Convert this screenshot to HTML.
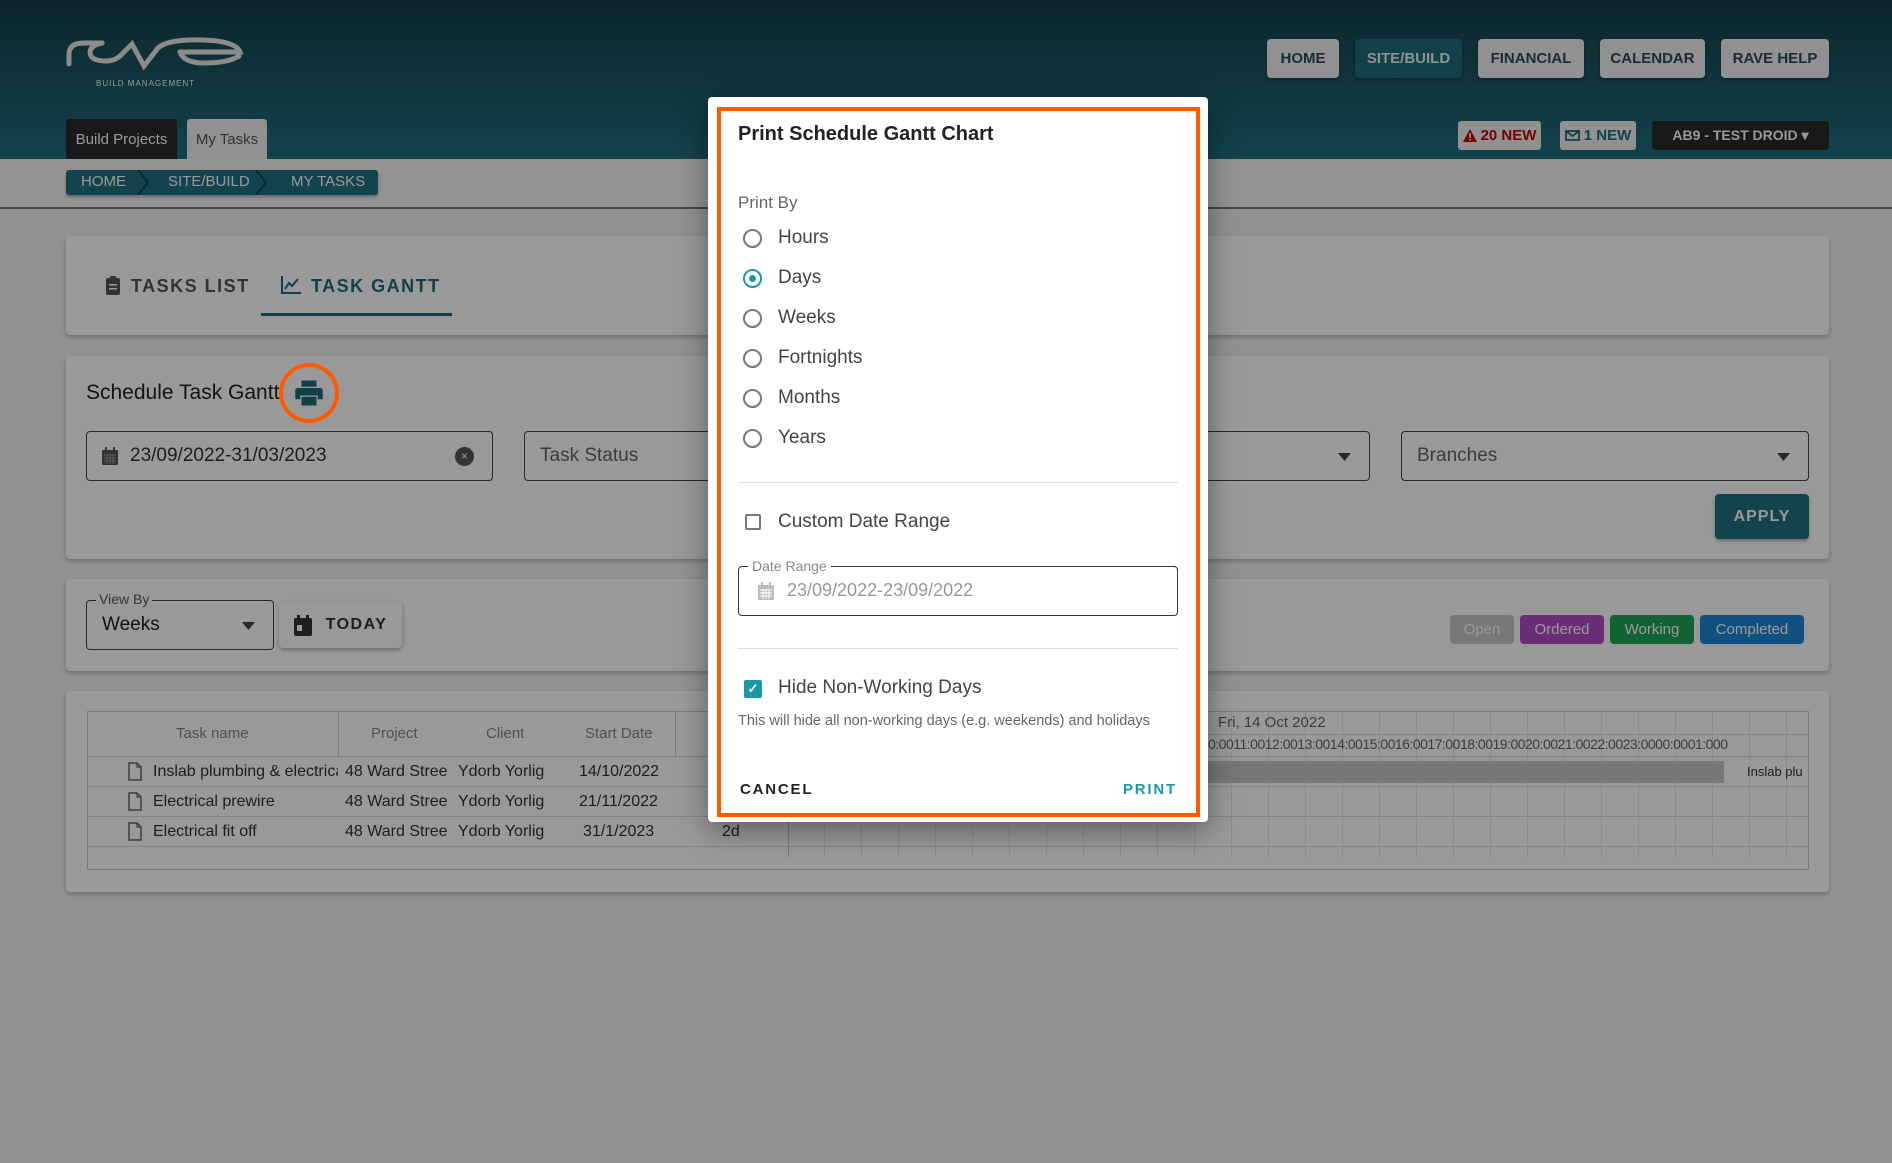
<!DOCTYPE html>
<html><head><meta charset="utf-8"><style>
*{box-sizing:border-box;margin:0;padding:0}
body{width:1892px;height:1163px;position:relative;overflow:hidden;background:#f2f2f2;font-family:"Liberation Sans",sans-serif;color:#333}
.a{position:absolute}
.hdr{left:0;top:0;width:1892px;height:159px;background:linear-gradient(#163f4b,#207080)}
.nb{top:39px;height:39px;background:#f2f2f2;border-radius:4px;font-size:15px;font-weight:bold;color:#2c4b55;display:flex;align-items:center;justify-content:center;box-shadow:0 2px 3px rgba(0,0,0,.3)}
.card{background:#fff;border-radius:4px;box-shadow:0 2px 4px rgba(0,0,0,.25)}
.fld{border:1.5px solid #444;border-radius:4px;font-size:19px;color:#666;display:flex;align-items:center;padding-left:15px}
.chip{top:615px;height:29px;border-radius:4px;color:#fff;font-size:15px;display:flex;align-items:center;justify-content:center}
.ov{left:0;top:0;width:1892px;height:1163px;background:rgba(0,0,0,.4)}
.cell{font-size:16px;color:#333;white-space:nowrap;overflow:hidden}
.rad{width:19px;height:19px;border:2px solid #777;border-radius:50%}
.rl{font-size:19px;color:#444}
.doc{position:absolute;left:40px;width:14px;height:19px}
</style></head><body>
<div class="a hdr"></div>
<svg class="a" style="left:64px;top:34px" width="182" height="56" viewBox="0 0 182 56"><g fill="none" stroke="#e8e8e8" stroke-width="5" stroke-linecap="round"><path d="M5 30 V20 Q5 9 20 9 H38"/><path d="M38 9 Q26 11 26 19 Q27 27 42 27 Q52 27 58 20 L68 10 L80 32 L94 14 Q104 5 138 6 Q172 7 176 18 H116"/><path d="M116 18 Q120 29 140 29 Q164 29 175 22"/></g><text x="32" y="52" font-size="8" fill="#fff" font-family="Liberation Sans" letter-spacing="1">BUILD MANAGEMENT</text></svg>
<div class="a nb" style="left:1267px;width:72px">HOME</div>
<div class="a nb" style="left:1355px;width:107px;background:#206b7a;color:#e8f4f6">SITE/BUILD</div>
<div class="a nb" style="left:1478px;width:106px">FINANCIAL</div>
<div class="a nb" style="left:1600px;width:105px">CALENDAR</div>
<div class="a nb" style="left:1721px;width:108px">RAVE HELP</div>
<div class="a" style="left:66px;top:119px;width:111px;height:40px;background:#2a2a2a;color:#fff;font-size:15px;display:flex;align-items:center;justify-content:center;border-radius:3px 3px 0 0">Build Projects</div>
<div class="a" style="left:187px;top:119px;width:80px;height:40px;background:#f2f2f2;color:#555;font-size:15px;display:flex;align-items:center;justify-content:center;border-radius:3px 3px 0 0">My Tasks</div>
<div class="a" style="left:1458px;top:121px;width:83px;height:29px;background:#f2f2f2;border-radius:3px;color:#c00;font-weight:bold;font-size:15px;display:flex;align-items:center;justify-content:center;gap:4px"><svg width="14" height="13" viewBox="0 0 14 13"><path d="M7 0L14 13H0z" fill="#c00"/><rect x="6.2" y="4" width="1.6" height="5" fill="#fff"/><rect x="6.2" y="10" width="1.6" height="1.6" fill="#fff"/></svg>20 NEW</div>
<div class="a" style="left:1560px;top:121px;width:76px;height:29px;background:#f2f2f2;border-radius:3px;color:#206b7a;font-weight:bold;font-size:15px;display:flex;align-items:center;justify-content:center;gap:4px"><svg width="15" height="11" viewBox="0 0 15 11"><rect x="1" y="1" width="13" height="9" fill="none" stroke="#206b7a" stroke-width="1.8"/><path d="M1 1L7.5 6L14 1" fill="none" stroke="#206b7a" stroke-width="1.8"/></svg>1 NEW</div>
<div class="a" style="left:1652px;top:121px;width:177px;height:29px;background:#2a2a2a;border-radius:3px;color:#fff;font-weight:bold;font-size:14px;display:flex;align-items:center;justify-content:center">AB9 - TEST DROID ▾</div>
<div class="a" style="left:0;top:159px;width:1892px;height:50px;background:#f5f5f5;border-bottom:2px solid #777"></div>
<div class="a" style="left:66px;top:170px;width:312px;height:25px;background:#207080;border-radius:3px;color:#fff;font-size:15px;box-shadow:0 2px 3px rgba(0,0,0,.3)">
<span class="a" style="left:15px;top:3px">HOME</span><span class="a" style="left:102px;top:3px">SITE/BUILD</span><span class="a" style="left:225px;top:3px">MY TASKS</span>
<svg class="a" style="left:70px;top:0" width="14" height="25"><path d="M2 0L12 12.5L2 25" fill="none" stroke="#0e4550" stroke-width="2"/></svg><svg class="a" style="left:188px;top:0" width="14" height="25"><path d="M2 0L12 12.5L2 25" fill="none" stroke="#0e4550" stroke-width="2"/></svg></div>

<div class="a card" style="left:66px;top:236px;width:1763px;height:99px"></div>
<svg class="a" style="left:106px;top:276px" width="14" height="19" viewBox="0 0 14 19"><rect x="0" y="2" width="14" height="17" rx="2" fill="#555"/><rect x="4" y="0" width="6" height="4" rx="1" fill="#555"/><rect x="3" y="8" width="8" height="1.5" fill="#fff"/><rect x="3" y="12" width="8" height="1.5" fill="#fff"/></svg>
<div class="a" style="left:131px;top:276px;font-size:18px;font-weight:bold;letter-spacing:1.5px;color:#555">TASKS LIST</div>
<svg class="a" style="left:281px;top:276px" width="20" height="18" viewBox="0 0 20 18"><path d="M1 0V17H20" fill="none" stroke="#1f6c7b" stroke-width="2"/><path d="M4 13L8 7L11 10L17 3" fill="none" stroke="#1f6c7b" stroke-width="2"/></svg>
<div class="a" style="left:311px;top:276px;font-size:18px;font-weight:bold;letter-spacing:1.5px;color:#1f6c7b">TASK GANTT</div>
<div class="a" style="left:261px;top:313px;width:191px;height:3px;background:#1f6c7b"></div>

<div class="a card" style="left:66px;top:356px;width:1763px;height:203px"></div>
<div class="a" style="left:86px;top:381px;font-size:21px;color:#222">Schedule Task Gantt</div>
<svg class="a" style="left:294px;top:378px" width="30" height="30" viewBox="0 0 24 24"><path fill="#1f6c7b" d="M6 2h12v5H6zM3 8h18a2 2 0 0 1 2 2v7h-4v-3H5v3H1v-7a2 2 0 0 1 2-2zM6 15h12v7H6z"/></svg>
<div class="a fld" style="left:86px;top:431px;width:407px;height:50px;color:#333"><svg width="16" height="18" viewBox="0 0 16 18" style="margin-right:12px"><rect x="0" y="3" width="16" height="15" rx="1" fill="#555"/><rect x="3" y="0" width="2" height="4" fill="#555"/><rect x="11" y="0" width="2" height="4" fill="#555"/><path d="M2 8h12M2 11h12M2 14h12M5 7v10M8 7v10M11 7v10" stroke="#999" stroke-width="1"/></svg>23/09/2022-31/03/2023<span class="a" style="right:18px;top:15px;width:19px;height:19px;border-radius:50%;background:#555;color:#fff;font-size:12px;text-align:center;line-height:19px">×</span></div>
<div class="a fld" style="left:524px;top:431px;width:300px;height:50px">Task Status</div>
<div class="a fld" style="left:1180px;top:431px;width:190px;height:50px"><svg class="a" style="right:18px;top:21px" width="13" height="8"><path d="M0 0H13L6.5 8z" fill="#444"/></svg></div>
<div class="a fld" style="left:1401px;top:431px;width:408px;height:50px">Branches<svg class="a" style="right:18px;top:21px" width="13" height="8"><path d="M0 0H13L6.5 8z" fill="#444"/></svg></div>
<div class="a" style="left:1715px;top:494px;width:94px;height:45px;background:#207080;border-radius:4px;color:#fff;font-weight:bold;font-size:16px;letter-spacing:1px;display:flex;align-items:center;justify-content:center;box-shadow:0 2px 3px rgba(0,0,0,.3)">APPLY</div>

<div class="a card" style="left:66px;top:579px;width:1763px;height:92px"></div>
<div class="a fld" style="left:86px;top:600px;width:188px;height:50px;color:#222">Weeks<svg class="a" style="right:18px;top:21px" width="13" height="8"><path d="M0 0H13L6.5 8z" fill="#444"/></svg></div>
<div class="a" style="left:96px;top:591px;background:#fff;padding:0 3px;font-size:14px;color:#555">View By</div>
<div class="a" style="left:279px;top:602px;width:123px;height:46px;background:#fff;border-radius:4px;box-shadow:0 2px 4px rgba(0,0,0,.3);font-size:16px;font-weight:bold;letter-spacing:1.5px;color:#333;display:flex;align-items:center;justify-content:center"><svg width="18" height="21" viewBox="0 0 18 21" style="margin-right:14px"><rect x="0" y="3" width="18" height="18" rx="2" fill="#333"/><rect x="3" y="0" width="3" height="5" fill="#333"/><rect x="12" y="0" width="3" height="5" fill="#333"/><rect x="3" y="10" width="5" height="6" fill="#fff"/></svg>TODAY</div>
<div class="a chip" style="left:1450px;width:64px;background:#c8c8c8">Open</div>
<div class="a chip" style="left:1520px;width:84px;background:#b44bc8">Ordered</div>
<div class="a chip" style="left:1610px;width:84px;background:#1fa658">Working</div>
<div class="a chip" style="left:1700px;width:104px;background:#1d88d8">Completed</div>

<div class="a card" style="left:66px;top:691px;width:1763px;height:201px"></div>
<div class="a" style="left:87px;top:711px;width:1722px;height:159px;border:1.5px solid #ccc;background:#fff">
<div class="a" style="left:0;top:44px;width:1720px;height:1px;background:#ccc"></div>
<div class="a" style="left:250px;top:0;width:1px;height:44px;background:#ccc"></div>
<div class="a" style="left:587px;top:0;width:1px;height:44px;background:#ccc"></div>
<div class="a" style="left:700px;top:0;width:1px;height:145px;background:#ccc"></div>
<div class="a" style="left:0;top:74px;width:1720px;height:1px;background:#ddd"></div>
<div class="a" style="left:0;top:104px;width:1720px;height:1px;background:#ddd"></div>
<div class="a" style="left:0;top:134px;width:1720px;height:1px;background:#ddd"></div>
<div class="a" style="left:700px;top:22px;width:1020px;height:1px;background:#ddd"></div>
<div class="a" style="left:700px;top:0;width:1020px;height:145px;background:repeating-linear-gradient(90deg,transparent 0,transparent 36px,#e6e6e6 36px,#e6e6e6 37px)"></div>
<div class="a cell" style="left:88px;top:13px;color:#888;font-size:15px">Task name</div>
<div class="a cell" style="left:283px;top:13px;color:#888;font-size:15px">Project</div>
<div class="a cell" style="left:398px;top:13px;color:#888;font-size:15px">Client</div>
<div class="a cell" style="left:497px;top:13px;color:#888;font-size:15px">Start Date</div>
<div class="a cell" style="left:1130px;top:2px;color:#666;font-size:15px">Fri, 14 Oct 2022</div>
<div class="a cell" style="left:1120px;top:24px;color:#666;font-size:14px;width:600px;letter-spacing:-.5px">0:0011:0012:0013:0014:0015:0016:0017:0018:0019:0020:0021:0022:0023:0000:0001:000</div>
<div class="a" style="left:1000px;top:49px;width:636px;height:22px;background:#c6c6c6;border-radius:2px"></div>
<div class="a cell" style="left:1659px;top:52px;font-size:13px;width:60px">Inslab plu</div>
<svg class="doc" style="top:50px" viewBox="0 0 14 19"><path d="M1 1H9L13 5V18H1z" fill="none" stroke="#666" stroke-width="1.5"/><path d="M9 1V5H13" fill="none" stroke="#666" stroke-width="1.2"/></svg>
<svg class="doc" style="top:80px" viewBox="0 0 14 19"><path d="M1 1H9L13 5V18H1z" fill="none" stroke="#666" stroke-width="1.5"/><path d="M9 1V5H13" fill="none" stroke="#666" stroke-width="1.2"/></svg>
<svg class="doc" style="top:110px" viewBox="0 0 14 19"><path d="M1 1H9L13 5V18H1z" fill="none" stroke="#666" stroke-width="1.5"/><path d="M9 1V5H13" fill="none" stroke="#666" stroke-width="1.2"/></svg>
<div class="a cell" style="left:65px;top:51px;width:185px">Inslab plumbing &amp; electrical</div>
<div class="a cell" style="left:65px;top:81px">Electrical prewire</div>
<div class="a cell" style="left:65px;top:111px">Electrical fit off</div>
<div class="a cell" style="left:257px;top:51px">48 Ward Stree</div><div class="a cell" style="left:370px;top:51px">Ydorb Yorlig</div><div class="a cell" style="left:491px;top:51px">14/10/2022</div>
<div class="a cell" style="left:257px;top:81px">48 Ward Stree</div><div class="a cell" style="left:370px;top:81px">Ydorb Yorlig</div><div class="a cell" style="left:491px;top:81px">21/11/2022</div>
<div class="a cell" style="left:257px;top:111px">48 Ward Stree</div><div class="a cell" style="left:370px;top:111px">Ydorb Yorlig</div><div class="a cell" style="left:495px;top:111px">31/1/2023</div>
<div class="a cell" style="left:634px;top:111px">2d</div>
</div>

<div class="a ov"></div>
<div class="a" style="left:279px;top:363px;width:60px;height:60px;border:4px solid #ff5a00;border-radius:50%"></div>

<div class="a" style="left:708px;top:97px;width:500px;height:725px;background:#fff;border-radius:4px;box-shadow:0 8px 30px rgba(0,0,0,.4)"></div>
<div class="a" style="left:717px;top:107px;width:483px;height:710px;border:4px solid #ff5a00"></div>
<div class="a" style="left:738px;top:123px;font-size:20px;font-weight:bold;color:#222">Print Schedule Gantt Chart</div>
<div class="a" style="left:738px;top:193px;font-size:17px;color:#666">Print By</div>
<div class="a rad" style="left:743px;top:229px"></div><div class="a rl" style="left:778px;top:227px">Hours</div>
<div class="a rad" style="left:743px;top:269px;border-color:#1a97a8"><div class="a" style="left:4px;top:4px;width:7px;height:7px;border-radius:50%;background:#1a97a8"></div></div><div class="a rl" style="left:778px;top:267px">Days</div>
<div class="a rad" style="left:743px;top:309px"></div><div class="a rl" style="left:778px;top:307px">Weeks</div>
<div class="a rad" style="left:743px;top:349px"></div><div class="a rl" style="left:778px;top:347px">Fortnights</div>
<div class="a rad" style="left:743px;top:389px"></div><div class="a rl" style="left:778px;top:387px">Months</div>
<div class="a rad" style="left:743px;top:429px"></div><div class="a rl" style="left:778px;top:427px">Years</div>
<div class="a" style="left:738px;top:482px;width:440px;height:1px;background:#ddd"></div>
<div class="a" style="left:745px;top:514px;width:16px;height:16px;border:2px solid #777;border-radius:2px"></div>
<div class="a rl" style="left:778px;top:511px">Custom Date Range</div>
<div class="a" style="left:738px;top:566px;width:440px;height:50px;border:1.5px solid #333;border-radius:4px"></div>
<div class="a" style="left:748px;top:558px;background:#fff;padding:0 4px;font-size:14px;color:#888">Date Range</div>
<svg class="a" style="left:758px;top:582px" width="16" height="18" viewBox="0 0 16 18"><rect x="0" y="3" width="16" height="15" rx="1" fill="#bbb"/><rect x="3" y="0" width="2" height="4" fill="#bbb"/><rect x="11" y="0" width="2" height="4" fill="#bbb"/><path d="M2 8h12M2 11h12M2 14h12M5 7v10M8 7v10M11 7v10" stroke="#fff" stroke-width="1"/></svg>
<div class="a" style="left:787px;top:580px;font-size:18px;color:#999">23/09/2022-23/09/2022</div>
<div class="a" style="left:738px;top:648px;width:440px;height:1px;background:#ddd"></div>
<div class="a" style="left:744px;top:680px;width:18px;height:18px;background:#1a97a8;border-radius:2px;color:#fff;font-size:13px;text-align:center;line-height:18px;font-weight:bold">✓</div>
<div class="a rl" style="left:778px;top:677px">Hide Non-Working Days</div>
<div class="a" style="left:738px;top:713px;font-size:14.5px;color:#666">This will hide all non-working days (e.g. weekends) and holidays</div>
<div class="a" style="left:740px;top:781px;font-size:15px;font-weight:bold;letter-spacing:1.8px;color:#222">CANCEL</div>
<div class="a" style="left:1123px;top:781px;font-size:15px;font-weight:bold;letter-spacing:1.8px;color:#1a97a8">PRINT</div>
</body></html>
